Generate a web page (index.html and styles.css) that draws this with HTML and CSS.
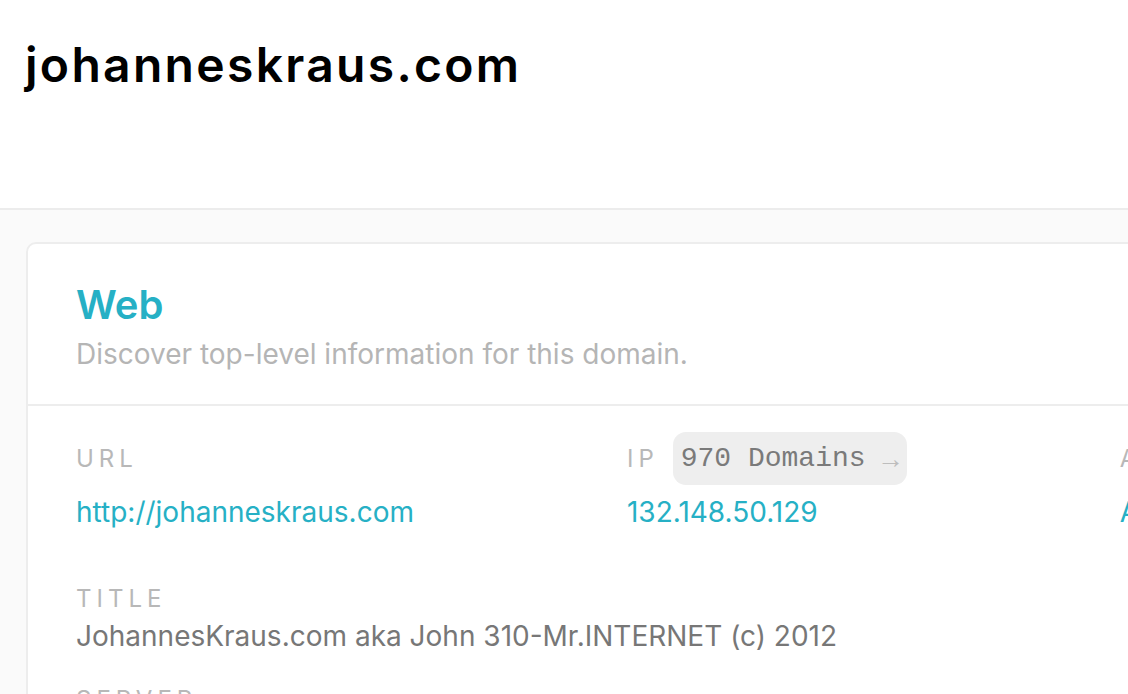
FILE: index.html
```html
<!DOCTYPE html>
<html lang="en">
<head>
    <meta charset="UTF-8">
    <meta name="viewport" content="width=device-width, initial-scale=1.0">
    <title>johanneskraus.com</title>
    <link rel="stylesheet" href="styles.css">
</head>
<body>
    <header class="site-header">
        <h1>johanneskraus.com</h1>
    </header>

    <main class="page">
        <!-- Bloque Web -->
        <section class="card">
            <div class="card-head">
                <h2>Web</h2>
                <p class="card-sub">Discover top-level information for this domain.</p>
            </div>

            <div class="card-body">
                <div class="field-row">
                    <div class="field">
                        <div class="label">URL</div>
                        <a class="value link" href="#">http://johanneskraus.com</a>
                    </div>
                    <div class="field">
                        <div class="label">IP <span class="pill">970 Domains <span class="arrow">&rarr;</span></span></div>
                        <a class="value link" href="#">132.148.50.129</a>
                    </div>
                    <div class="field">
                        <div class="label">ASN</div>
                        <a class="value link" href="#">AS26496</a>
                    </div>
                </div>

                <div class="field">
                    <div class="label">Title</div>
                    <div class="value">JohannesKraus.com aka John 310-Mr.INTERNET (c) 2012</div>
                </div>

                <div class="field">
                    <div class="label">Server</div>
                    <div class="value">Apache</div>
                </div>
            </div>
        </section>
    </main>
</body>
</html>
```

FILE: styles.css
```css
/* Estilo general */
html, body {
    overflow: hidden;
}

body {
    margin: 0;
    font-family: Inter, 'Noto Sans', sans-serif;
    color: #111;
    background-color: #fafafa;
}

.site-header {
    background-color: #fff;
    height: 210px;
    box-sizing: border-box;
    padding: 36px 25px 0;
    border-bottom: 2px solid #ececec;
}

.site-header h1 {
    margin: 0;
    font-size: 48px;
    line-height: 1.2;
    font-weight: 600;
    letter-spacing: 2.3px;
    color: #000;
}

.page {
    padding: 32px 0 0 26px;
}

.card {
    width: 1500px;
    background: #fff;
    border: 2px solid #ededed;
    border-radius: 10px;
}

.card-head {
    padding: 37px 48px 31px;
    border-bottom: 2px solid #ededed;
}

.card-head h2 {
    margin: 0;
    font-size: 40px;
    line-height: 48px;
    font-weight: 600;
    color: #26b0c5;
}

.card-sub {
    margin: 6px 0 0;
    font-size: 28px;
    line-height: 38px;
    color: #b5b5b5;
}

.card-body {
    padding: 26px 48px 40px;
}

.field-row {
    display: flex;
    gap: 213px;
    margin-bottom: 23px;
}

.field {
    margin-bottom: 27px;
}

.label {
    display: flex;
    align-items: center;
    min-height: 34px;
    font-size: 24px;
    letter-spacing: 5px;
    text-transform: uppercase;
    color: #b8b8b8;
}

.field-row .label {
    min-height: 53px;
}

.value {
    display: block;
    margin-top: 2px;
    font-size: 28px;
    line-height: 38px;
    color: #777;
}

.field-row .value {
    margin-top: 8px;
}

.link {
    color: #26b0c5;
    text-decoration: none;
}

.pill {
    display: inline-flex;
    align-items: center;
    height: 53px;
    margin-left: 14px;
    padding: 0 8px 0 8px;
    border-radius: 13px;
    background-color: #eeeeee;
    font-family: 'Liberation Mono', 'DejaVu Sans Mono', monospace;
    font-size: 28px;
    letter-spacing: 0;
    text-transform: none;
    color: #7a7a7a;
}

.arrow {
    margin-left: 17px;
    padding-top: 5px;
    font-size: 27px;
    color: #bdbdbd;
}
```
